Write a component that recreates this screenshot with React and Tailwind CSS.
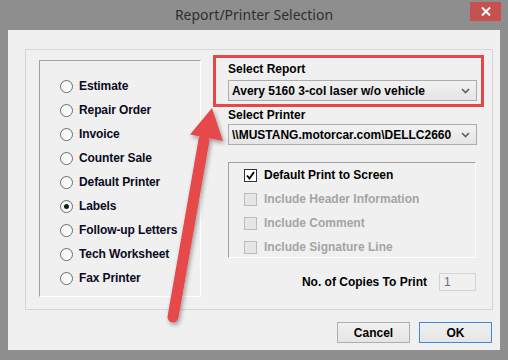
import React from 'react'

const reports = [
  { label: 'Estimate' },
  { label: 'Repair Order' },
  { label: 'Invoice' },
  { label: 'Counter Sale' },
  { label: 'Default Printer' },
  { label: 'Labels', checked: true },
  { label: 'Follow-up Letters' },
  { label: 'Tech Worksheet' },
  { label: 'Fax Printer' },
]

const options = [
  { label: 'Default Print to Screen', checked: true },
  { label: 'Include Header Information', disabled: true },
  { label: 'Include Comment', disabled: true },
  { label: 'Include Signature Line', disabled: true },
]

const font = "font-['Liberation_Sans',Arial,sans-serif]"

function Chevron() {
  return (
    <svg width="9" height="6" viewBox="0 0 9 6" className="shrink-0">
      <polyline points="1,1 4.5,4.5 8,1" fill="none" stroke="#606060" strokeWidth="1.6" />
    </svg>
  )
}

function Combo({ value }) {
  return (
    <div className="w-[249px] h-[21px] border border-[#acacac] bg-gradient-to-b from-[#f2f2f2] to-[#e5e5e5] flex items-center pl-[3px] pr-[6px] gap-[6px]">
      <span className="flex-1 whitespace-nowrap text-[12px] font-bold text-black leading-none">{value}</span>
      <Chevron />
    </div>
  )
}

function Radio({ label, checked }) {
  return (
    <div className="h-[24px] flex items-center">
      <div className="w-[13px] h-[13px] rounded-full border border-[#6a6a6a] bg-gradient-to-b from-[#f4f4f4] to-white flex items-center justify-center ml-[20px]">
        {checked && <div className="w-[5px] h-[5px] rounded-full bg-[#1a1a1a]" />}
      </div>
      <span className="ml-[6px] text-[12px] font-bold text-[#0a0a1e] leading-none tracking-[-0.1px]">{label}</span>
    </div>
  )
}

function Check({ label, checked, disabled }) {
  return (
    <div className="h-[24px] flex items-center">
      <div
        className={
          disabled
            ? 'w-[13px] h-[13px] border border-[#bcbcbc] bg-[#e6e6e6] ml-[15px]'
            : 'w-[13px] h-[13px] border border-[#333333] bg-white ml-[15px] flex items-center justify-center'
        }
      >
        {checked && (
          <svg width="9" height="9" viewBox="0 0 9 9">
            <polyline points="1,4.5 3.5,7.5 8,1" fill="none" stroke="#000" strokeWidth="1.8" />
          </svg>
        )}
      </div>
      <span className={`ml-[7px] text-[12px] font-bold leading-none ${disabled ? 'text-[#a4a4a4]' : 'text-black'}`}>
        {label}
      </span>
    </div>
  )
}

function Arrow() {
  return (
    <svg width="508" height="360" className="absolute left-0 top-0 pointer-events-none">
      <defs>
        <filter id="sh" x="-20%" y="-20%" width="140%" height="140%">
          <feDropShadow dx="1.5" dy="2.5" stdDeviation="2" floodColor="#000" floodOpacity="0.35" />
        </filter>
      </defs>
      <g filter="url(#sh)" fill="#e64848">
        <line x1="173" y1="317" x2="204" y2="140" stroke="#e64848" strokeWidth="11" strokeLinecap="round" />
        <polygon points="212,108 223,141 190,134.5" />
      </g>
    </svg>
  )
}

export default function App() {
  return (
    <div className={`relative w-[508px] h-[360px] bg-[#8e8e8e] flex flex-col ${font}`}>
      {/* Title bar */}
      <div className="h-[30px] flex items-start">
        <div className="flex-1 h-full flex items-center justify-center pl-[38px] pb-[1px]">
          <span className="font-['Noto_Sans',sans-serif] text-[14px] text-[#2e2e2e]">Report/Printer Selection</span>
        </div>
        <div className="w-[31px] h-[19px] mt-[2px] mr-[7px] bg-[#c75050] flex items-center justify-center">
          <svg width="10" height="9" viewBox="0 0 10 9">
            <path d="M1 0.5 L9 8.5 M9 0.5 L1 8.5" stroke="#fff" strokeWidth="2" />
          </svg>
        </div>
      </div>

      {/* Client area */}
      <div className="mx-[8px] h-[320px] bg-[#f0f0f0] flex flex-col pt-[19px] pl-[17px] pr-[7px]">
        <div className="w-[468px] h-[261px] border border-[#d5d5d5] flex items-start">
          {/* Report list */}
          <div className="ml-[13px] mt-[10px] w-[162px] h-[237px] border border-t-[#a0a0a0] border-l-[#a0a0a0] border-r-white border-b-white pt-[13px]">
            {reports.map((r) => (
              <Radio key={r.label} {...r} />
            ))}
          </div>

          {/* Right column */}
          <div className="ml-[12px] mt-[5px] flex flex-col">
            <div className="w-[271px] h-[52px] border-[3px] border-[#e64848] pl-[12px] pt-[4px] flex flex-col">
              <div className="h-[14px] flex items-center text-[12px] font-bold text-black">Select Report</div>
              <div className="mt-[4px]">
                <Combo value="Avery 5160 3-col laser w/o vehicle" />
              </div>
            </div>
            <div className="pl-[15px] flex flex-col">
              <div className="mt-[1px] h-[14px] flex items-center text-[12px] font-bold text-black">Select Printer</div>
              <div className="mt-[2px]">
                <Combo value="\\MUSTANG.motorcar.com\DELLC2660" />
              </div>

              <div className="mt-[17px] w-[248px] h-[96px] border border-t-[#a0a0a0] border-l-[#a0a0a0] border-r-white border-b-white">
                {options.map((o) => (
                  <Check key={o.label} {...o} />
                ))}
              </div>

              <div className="mt-[15px] w-[248px] flex items-center justify-end">
                <span className="text-[12px] font-bold text-black leading-none">No. of Copies To Print</span>
                <div className="ml-[12px] w-[37px] h-[18px] border border-[#d4d4d4] bg-[#f0f0f0] flex items-center pl-[4px] text-[12px] text-[#6d6d6d]">
                  1
                </div>
              </div>
            </div>
          </div>
        </div>

        {/* Buttons */}
        <div className="mt-[12px] flex justify-end gap-[9px] pr-[1px]">
          <button className="w-[73px] h-[21px] border border-[#adadad] bg-gradient-to-b from-[#f0f0f0] to-[#e5e5e5] text-[12px] font-bold text-black leading-none">
            Cancel
          </button>
          <button className="w-[73px] h-[21px] border border-[#3c8bd9] bg-gradient-to-b from-[#f0f0f0] to-[#e5e5e5] text-[12px] font-bold text-black leading-none">
            OK
          </button>
        </div>
      </div>

      <Arrow />
    </div>
  )
}
